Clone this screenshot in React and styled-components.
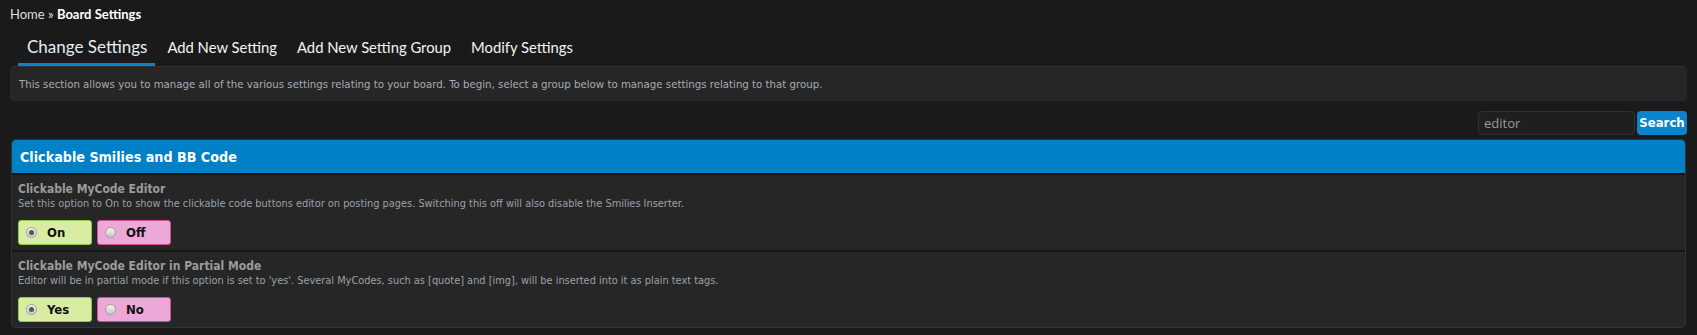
import React from "react";
import styled, { createGlobalStyle, css } from "styled-components";

const Global = createGlobalStyle`
  html, body { margin: 0; padding: 0; background: #1a1a1a; }
  body { font-family: "DejaVu Sans Condensed", "DejaVu Sans", sans-serif; }
  * { box-sizing: border-box; }
`;

const Page = styled.div`
  padding: 6px 10px 0 10px;
  background: #1a1a1a;
  min-height: 335px;
`;

const Breadcrumb = styled.div`
  font-family: Lato, "Open Sans", sans-serif;
  font-size: 13px;
  color: #ddd;
  line-height: 16px;
  b { color: #fff; font-weight: 700; }
`;

const Tabs = styled.div`
  display: flex;
  align-items: flex-end;
  margin-top: 15px;
  padding-left: 8px;
`;

const Tab = styled.div`
  font-family: Lato, "Open Sans", sans-serif;
  font-size: 14.8px;
  color: #f4f4f4;
  padding: 0 8px 6px 9px;
  margin-right: 3px;
  line-height: 20px;
  border-bottom: 3px solid transparent;
  ${(p) =>
    p.$active &&
    css`
      font-size: 17px;
      border-bottom-color: #0a84cc;
      color: #e6ecf2;
    `}
`;

const InfoBox = styled.div`
  background: #262626;
  border-top: 1px solid #2f2f2f;
  border-radius: 4px;
  padding: 10px 9px 10px;
  font-size: 11.35px;
  color: #a3adb6;
  line-height: 14px;
`;

const SearchRow = styled.div`
  display: flex;
  justify-content: flex-end;
  align-items: center;
  gap: 2px;
  margin-top: 10px;
`;

const SearchInput = styled.div`
  width: 157px;
  height: 24px;
  background: #1f1f1f;
  border: 1px solid #303030;
  border-radius: 4px;
  padding: 0 5px;
  font-family: "Open Sans", sans-serif;
  font-size: 13px;
  line-height: 22px;
  color: #9a9a9a;
`;

const SearchButton = styled.div`
  width: 50px;
  height: 24px;
  background: #0a84cc;
  border-radius: 4px;
  color: #fff;
  font-weight: 700;
  font-size: 13px;
  line-height: 24px;
  text-align: center;
`;

const Table = styled.div`
  margin: 4px 1px 0 1px;
  border: 1px solid #333;
  border-radius: 5px;
  background: #262626;
  overflow: hidden;
`;

const TableHead = styled.div`
  background: #0080c6;
  height: 35px;
  padding: 0 8px;
  display: flex;
  align-items: center;
  color: #fff;
  font-weight: 700;
  font-size: 14.2px;
  border-bottom: 2px solid #151515;
`;

const Row = styled.div`
  padding: 6px 6px 5px;
  border-bottom: ${(p) => (p.$last ? "none" : "2px solid #151515")};
`;

const RowTitle = styled.div`
  font-weight: 700;
  font-size: 12px;
  color: #9c9c9c;
  line-height: 16px;
`;

const RowDesc = styled.div`
  font-size: 10.9px;
  color: #9aa2aa;
  line-height: 13px;
`;

const Options = styled.div`
  display: flex;
  gap: 5px;
  margin-top: 10px;
`;

const Option = styled.div`
  width: 74px;
  height: 25px;
  border-radius: 3px;
  display: flex;
  align-items: center;
  padding-left: 7px;
  gap: 10px;
  font-weight: 700;
  font-size: 13px;
  color: #111;
  ${(p) =>
    p.$yes
      ? css`
          background: #d8eda3;
          border: 1px solid #8fc84a;
        `
      : css`
          background: #eca8d6;
          border: 1px solid #d0509e;
        `}
`;

const Radio = styled.span`
  width: 11px;
  height: 11px;
  border-radius: 50%;
  border: 1px solid #a0a0a0;
  background: linear-gradient(#f4f4f4, #c8c8c8);
  display: inline-flex;
  align-items: center;
  justify-content: center;
  &::after {
    content: "";
    width: 5px;
    height: 5px;
    border-radius: 50%;
    background: ${(p) => (p.$checked ? "#555" : "transparent")};
  }
`;

const settings = [
  {
    title: "Clickable MyCode Editor",
    desc: "Set this option to On to show the clickable code buttons editor on posting pages. Switching this off will also disable the Smilies Inserter.",
    yes: "On",
    no: "Off",
  },
  {
    title: "Clickable MyCode Editor in Partial Mode",
    desc: "Editor will be in partial mode if this option is set to 'yes'. Several MyCodes, such as [quote] and [img], will be inserted into it as plain text tags.",
    yes: "Yes",
    no: "No",
  },
];

export default function App() {
  return (
    <Page>
      <Global />
      <Breadcrumb>
        Home » <b>Board Settings</b>
      </Breadcrumb>
      <Tabs>
        <Tab $active>Change Settings</Tab>
        <Tab>Add New Setting</Tab>
        <Tab>Add New Setting Group</Tab>
        <Tab>Modify Settings</Tab>
      </Tabs>
      <InfoBox>
        This section allows you to manage all of the various settings relating to your board. To begin, select a group below to manage settings relating to that group.
      </InfoBox>
      <SearchRow>
        <SearchInput>editor</SearchInput>
        <SearchButton>Search</SearchButton>
      </SearchRow>
      <Table>
        <TableHead>Clickable Smilies and BB Code</TableHead>
        {settings.map((s, i) => (
          <Row key={s.title} $last={i === settings.length - 1}>
            <RowTitle>{s.title}</RowTitle>
            <RowDesc>{s.desc}</RowDesc>
            <Options>
              <Option $yes>
                <Radio $checked />
                {s.yes}
              </Option>
              <Option>
                <Radio />
                {s.no}
              </Option>
            </Options>
          </Row>
        ))}
      </Table>
    </Page>
  );
}
